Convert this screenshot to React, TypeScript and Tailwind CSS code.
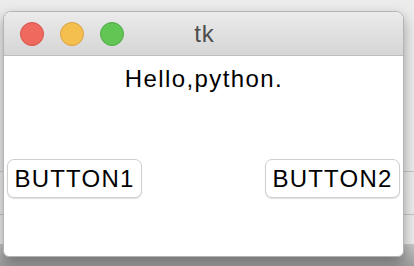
import React from "react";

export default function App() {
  const font = { fontFamily: '"Liberation Sans", Arial, sans-serif' };
  return (
    <div
      className="relative w-[414px] h-[266px] overflow-hidden bg-[#ececec]"
      style={font}
    >
      {/* backdrop window edges on right */}
      <div className="absolute left-0 right-0 top-[171px] h-px bg-[#c4c4c4]" />
      <div className="absolute left-0 right-0 top-[214px] h-px bg-[#c4c4c4]" />
      <div className="absolute left-0 right-0 top-[244px] bottom-0 bg-gradient-to-b from-[#c8c8c8] to-[#9c9c9c]" />
      <div className="relative pt-[11px] pl-[3px]">
        <div className="w-[401px] h-[246px] flex flex-col rounded-t-[8px] rounded-b-[6px] overflow-hidden border border-[#b4b4b4] bg-white shadow-[0_6px_14px_rgba(0,0,0,0.35)]">
          <div className="relative h-[44px] shrink-0 flex items-center bg-gradient-to-b from-[#ebebeb] to-[#d5d5d5] border-b border-[#bdbdbd]">
            <div className="flex items-center gap-[16px] pl-[16px]">
              <span className="w-[24px] h-[24px] rounded-full bg-[#ee6a5f] border border-[#d85248]" />
              <span className="w-[24px] h-[24px] rounded-full bg-[#f5bf4f] border border-[#d9a23f]" />
              <span className="w-[24px] h-[24px] rounded-full bg-[#62c655] border border-[#4ea942]" />
            </div>
            <div className="absolute inset-0 flex items-center justify-center text-[24px] text-[#4d4d4d] tracking-[1px] pl-[2px]">
              tk
            </div>
          </div>
          <div className="flex-1 flex flex-col">
            <div className="h-[44px] flex items-center justify-center text-[24px] text-black tracking-[1.4px] pt-[1px] pl-[1px]">
              Hello,python.
            </div>
            <div className="flex justify-between px-[3px] pt-[59px]">
              <div className="w-[135px] h-[39px] rounded-[7px] border border-[#cfcfcf] bg-white shadow-[0_1px_1px_rgba(0,0,0,0.12)] flex items-center justify-center text-[24px] text-black tracking-[1.2px]">
                BUTTON1
              </div>
              <div className="w-[135px] h-[39px] rounded-[7px] border border-[#cfcfcf] bg-white shadow-[0_1px_1px_rgba(0,0,0,0.12)] flex items-center justify-center text-[24px] text-black tracking-[1.2px]">
                BUTTON2
              </div>
            </div>
          </div>
        </div>
      </div>
    </div>
  );
}
